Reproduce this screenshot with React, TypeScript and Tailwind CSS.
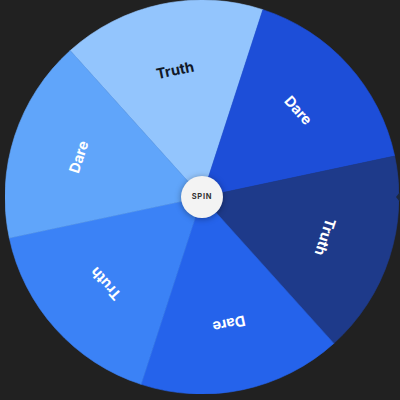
import React from "react";

type Slice = { label: string; fill: string; text: string };

const slices: Slice[] = [
  { label: "Truth", fill: "#93c5fd", text: "#111827" },
  { label: "Dare", fill: "#1d4ed8", text: "#ffffff" },
  { label: "Truth", fill: "#1e3a8a", text: "#ffffff" },
  { label: "Dare", fill: "#2563eb", text: "#ffffff" },
  { label: "Truth", fill: "#3b82f6", text: "#ffffff" },
  { label: "Dare", fill: "#60a5fa", text: "#ffffff" },
];

const R = 197;
const START = -132; // first slice edge, degrees from +x (clockwise)

function pt(deg: number, r: number) {
  const a = (deg * Math.PI) / 180;
  return [r * Math.cos(a), r * Math.sin(a)];
}

function Wheel() {
  const step = 360 / slices.length;
  return (
    <svg width={394} height={394} viewBox="-197 -197 394 394" className="block">
      {slices.map((s, i) => {
        const a0 = START + i * step;
        const a1 = a0 + step;
        const [x0, y0] = pt(a0, R);
        const [x1, y1] = pt(a1, R);
        return (
          <path
            key={`p${i}`}
            d={`M0 0 L${x0} ${y0} A${R} ${R} 0 0 1 ${x1} ${y1} Z`}
            fill={s.fill}
            stroke={s.fill}
            strokeWidth={0.6}
            strokeLinejoin="round"
          />
        );
      })}
      {slices.map((s, i) => {
        const mid = START + i * step + step / 2;
        return (
          <g key={`t${i}`} transform={`rotate(${mid + 90}) translate(0 -130)`}>
            <text
              textAnchor="middle"
              dominantBaseline="central"
              fill={s.text}
              style={{ fontFamily: "Inter, 'Noto Sans', sans-serif", fontWeight: 700, fontSize: 14.5 }}
            >
              {s.label}
            </text>
          </g>
        );
      })}
    </svg>
  );
}

export default function App() {
  return (
    <div className="relative h-[400px] w-[400px] overflow-hidden bg-[#212121]">
      <div className="pl-[5px]">
        <div className="relative h-[394px] w-[394px]">
          <Wheel />
          <button className="absolute left-[176px] top-[176px] flex h-[42px] w-[42px] items-center justify-center rounded-full bg-[#f3f3f3] shadow-[0_1px_6px_rgba(0,0,0,0.35)]">
            <span className="font-['Inter',sans-serif] text-[7.5px] font-bold tracking-[0.1em] text-[#333]">
              SPIN
            </span>
          </button>
        </div>
      </div>
      <div className="absolute right-0 top-[192px] h-0 w-0 border-y-[5px] border-r-[4px] border-y-transparent border-r-[#1e293b]" />
    </div>
  );
}
